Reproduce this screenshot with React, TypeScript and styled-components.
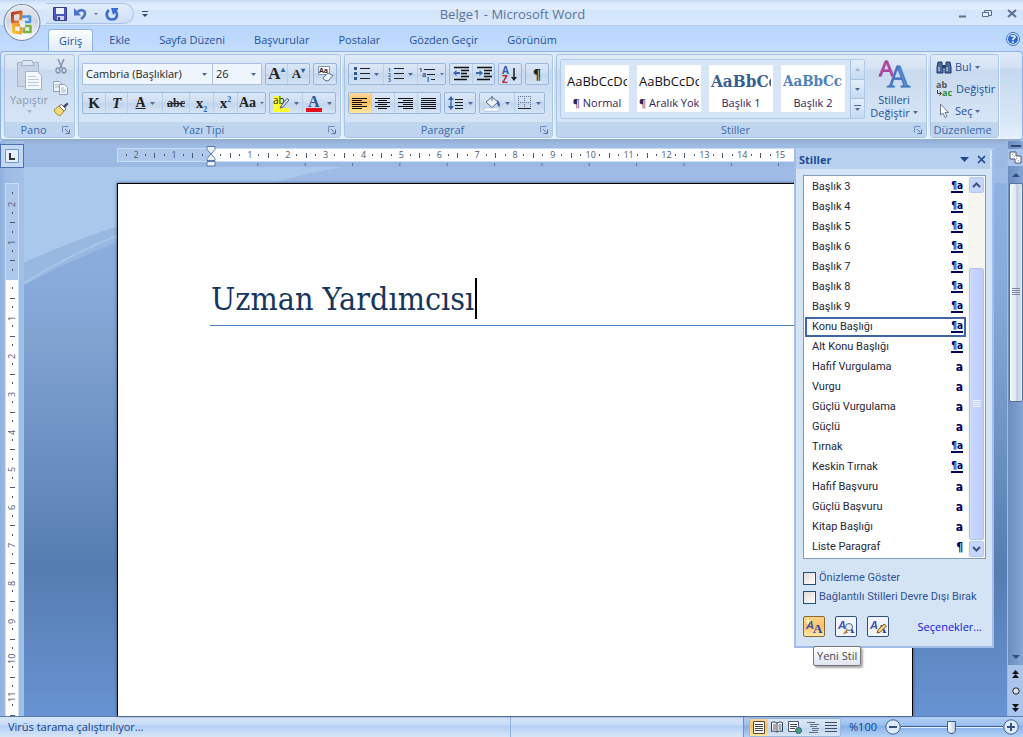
import React from 'react';
import styled, { createGlobalStyle, css } from 'styled-components';

const ui = `"Open Sans", "Noto Sans", sans-serif`;
const paneFont = `Roboto, "Noto Sans", sans-serif`;
const serif = `"DejaVu Serif Condensed", "DejaVu Serif", serif`;

const GlobalStyle = createGlobalStyle`
  *, *::before, *::after { box-sizing: border-box; }
  body { margin: 0; font-family: ${ui}; font-size: 11px; line-height: 14px; color: #15428b; }
  button, select, input { font: inherit; color: inherit; margin: 0; padding: 0; }
  button { background: none; border: 0; }
  svg { display: block; flex: none; overflow: visible; }
  h1, h2, ul { margin: 0; padding: 0; font-weight: normal; }
`;

/* ---------- window frame ---------- */
const Window = styled.div`
  display: flex;
  flex-direction: column;
  height: 100vh;
  overflow: hidden;
  position: relative;
  background: #bfdbff;
`;
const TitleBar = styled.header`
  display: grid;
  grid-template-columns: 1fr auto 1fr;
  align-items: center;
  height: 26px;
  padding: 2px 6px 0 8px;
  background: linear-gradient(#c3d8f4 0, #dbe9fb 3px, #e3effd 9px, #d3e5fb 10px, #d9e9fd 100%);
  border-bottom: 1px solid #b0cdf3;
`;
const QuickAccess = styled.div`
  display: flex;
  align-items: center;
  gap: 8px;
  padding-left: 38px;
`;
const QuickPill = styled.div`
  display: flex;
  align-items: center;
  gap: 7px;
  height: 21px;
  width: 88px;
  padding-left: 7px;
  border: 1px solid #a9c3e8;
  border-left: 0;
  border-radius: 0 11px 11px 0;
  background: linear-gradient(#e2edfb, #cfe0f6);
`;
const Caption = styled.h1`
  font-size: 13px;
  line-height: 18px;
  color: #5d7299;
`;
const WindowButtons = styled.div`
  display: flex;
  justify-content: flex-end;
  align-items: center;
  gap: 15px;
`;
const OfficeButton = styled.button`
  position: absolute;
  left: 3px;
  top: 3px;
  z-index: 2;
`;
const TabRow = styled.nav`
  display: flex;
  align-items: flex-end;
  height: 25px;
  padding: 0 3px 0 48px;
  background: linear-gradient(#bad6fd, #c3dcff);
`;
const Tab = styled.button<{ $active?: boolean }>`
  height: 22px;
  padding: 0 11px;
  margin-right: 7px;
  font-size: 11px;
  line-height: 22px;
  color: #25509b;
  border-radius: 3px 3px 0 0;
  ${(p) => p.$active && css`
    margin-right: 5px;
    padding: 0 10px;
    background: linear-gradient(#fbfdff, #e1ecfa);
    border: 1px solid #8db2e3;
    border-bottom: 0;
    line-height: 21px;
  `}
`;
const HelpButton = styled.button`
  margin-left: auto;
  align-self: center;
`;

/* ---------- ribbon ---------- */
const Ribbon = styled.section`
  display: flex;
  gap: 3px;
  height: 90px;
  padding: 2px 3px 1px 3px;
  border: 1px solid #8db2e3;
  border-bottom: 2px solid #93afcf;
  border-radius: 4px;
  background: linear-gradient(#dfeaf8 0, #d2e0f2 16px, #c6d8ee 17px, #d8e7f7 80%, #e6f2fd 100%);
`;
const GroupBox = styled.section`
  display: flex;
  flex-direction: column;
  border: 1px solid #a9c5e6;
  border-radius: 3px;
  overflow: hidden;
  box-shadow: 1px 1px 0 #eef6ff;
  background: linear-gradient(#e0eaf7 0, #d5e2f3 14px, #c9daef 15px, #dae8f8 100%);
`;
const GroupBody = styled.div`
  flex: 1;
  display: flex;
  padding: 4px 3px 0 3px;
`;
const GroupFooter = styled.footer`
  display: flex;
  align-items: center;
  height: 15px;
  padding-right: 4px;
  background: linear-gradient(#c1d6ee, #bdd4f0);
  color: #3e6aaa;
  line-height: 15px;
`;
const GroupTitle = styled.h2`
  flex: 1;
  font-size: 11px;
  text-align: center;
`;
const Rows = styled.div`
  display: flex;
  flex-direction: column;
  gap: 7px;
  padding-top: 4px;
`;
const ControlRow = styled.div`
  display: flex;
  gap: 3px;
`;
const Strip = styled.div`
  display: flex;
  height: 22px;
  border: 1px solid #9ab7dc;
  border-radius: 2px;
  background: linear-gradient(#dce8f7 0, #ccdcf1 50%, #c2d5ed 51%, #d5e4f6 100%);
`;
const Tool = styled.button<{ $w?: number; $on?: boolean }>`
  display: flex;
  align-items: center;
  justify-content: center;
  gap: 4px;
  width: ${(p) => p.$w ?? 22}px;
  color: #222;
  & + & { border-left: 1px solid #b9cfea; }
  ${(p) => p.$on && css`background: linear-gradient(#fcd9a0, #fdbb62 45%, #fcc873 60%, #fee7a0);`}
`;
const Letter = styled.span<{ $size?: number; $color?: string }>`
  font-family: "Liberation Serif", serif;
  font-weight: bold;
  font-size: ${(p) => p.$size ?? 15}px;
  line-height: 18px;
  color: ${(p) => p.$color ?? '#222'};
  sub, sup { font-size: 8px; line-height: 0; color: #2b5fb5; }
  em { font-style: italic; }
`;
const Combo = styled.label<{ $w: number }>`
  display: grid;
  align-items: center;
  width: ${(p) => p.$w}px;
  height: 22px;
  border: 1px solid #abc1de;
  background: #eef5fd;
  & + & { margin-left: -4px; }
  > * { grid-area: 1 / 1; }
  > svg { justify-self: end; margin-right: 5px; pointer-events: none; }
`;
const Select = styled.select`
  appearance: none;
  height: 20px;
  width: 100%;
  padding-left: 3px;
  border: 0;
  background: transparent;
  color: #1e1e1e;
`;
const PasteButton = styled.button`
  display: flex;
  flex-direction: column;
  align-items: center;
  width: 42px;
  color: #8c9bb0;
  gap: 3px;
`;
const IconColumn = styled.div`
  display: flex;
  flex-direction: column;
  align-items: center;
  gap: 7px;
  width: 21px;
`;
const Gallery = styled.div`
  display: flex;
  height: 60px;
  border: 1px solid #b0cbea;
  border-radius: 2px;
  background: #d7e6f7;
`;
const Cards = styled.div`
  display: flex;
  gap: 8px;
  padding: 5px 5px 6px 4px;
`;
const Card = styled.button`
  display: flex;
  flex-direction: column;
  width: 64px;
  padding: 0 2px;
  overflow: hidden;
  background: #fff;
  color: #33235c;
`;
const Sample = styled.span<{ $heading?: number }>`
  width: 100%;
  height: 31px;
  line-height: 33px;
  overflow: hidden;
  white-space: nowrap;
  text-align: left;
  font-size: 13px;
  color: #111;
  ${(p) => p.$heading && css`
    font-family: ${serif};
    font-weight: bold;
    color: ${p.$heading === 1 ? '#365f91' : '#4f81bd'};
    font-size: ${p.$heading === 1 ? 17 : 15}px;
  `}
`;
const CardName = styled.span`
  width: 100%;
  text-align: center;
  white-space: nowrap;
`;
const GallerySide = styled.div`
  display: flex;
  flex-direction: column;
  width: 14px;
`;
const GalleryArrow = styled.button`
  flex: 1;
  display: flex;
  align-items: center;
  justify-content: center;
  border-left: 1px solid #a6c3e6;
  background: linear-gradient(#e3eefa, #c6daf1);
  & + & { border-top: 1px solid #a6c3e6; }
`;
const BigButton = styled.button`
  display: flex;
  flex-direction: column;
  align-items: center;
  width: 58px;
  line-height: 13px;
  white-space: nowrap;
  > svg { margin-bottom: 5px; }
  color: #25509b;
`;
const Inline = styled.span`
  display: flex;
  align-items: center;
  gap: 3px;
`;
const EditList = styled.div`
  display: flex;
  flex-direction: column;
  gap: 6px;
`;
const EditButton = styled.button`
  display: flex;
  align-items: center;
  gap: 3px;
  height: 16px;
  padding-left: 2px;
  color: #25509b;
`;

/* ---------- document area ---------- */
const Workspace = styled.main`
  flex: 1;
  min-height: 0;
  display: flex;
  position: relative;
  background: #9ebbe4;
`;
const RulerColumn = styled.div`
  display: flex;
  flex-direction: column;
  align-items: center;
  width: 24px;
  background: linear-gradient(90deg, #8fb1dd, #9dbbe3 6px, #a3c0e8);
`;
const TabStop = styled.button`
  display: flex;
  align-items: center;
  justify-content: center;
  width: 24px;
  height: 24px;
  margin-top: 3px;
  border: 1px solid #4970b8;
  background: #c4d8f3;
`;
const VerticalRuler = styled.div`
  flex: 1;
  display: flex;
  flex-direction: column;
  width: 14px;
  margin-top: 15px;
  min-height: 0;
  overflow: hidden;
  border: 1px solid #c9defa;
  border-bottom: 0;
`;
const Center = styled.div`
  flex: 1;
  min-width: 0;
  display: flex;
  flex-direction: column;
`;
const HorizontalBand = styled.div`
  height: 26px;
  padding: 7px 0 0 93px;
  background: linear-gradient(#94b0d8 0, #9ebbe4 4px, #9ab9e2);
`;
const HorizontalRuler = styled.div`
  display: grid;
  grid-template-columns: 94px 606px 94px;
  width: fit-content;
  height: 14px;
  border: 1px solid #c9defa;
  border-right: 0;
`;
const Span = styled.div<{ $white?: boolean; $vertical?: boolean }>`
  display: grid;
  flex: none;
  ${(p) => (p.$vertical ? css`grid-template-rows: repeat(16, 1fr); height: 606px;` : css`grid-template-columns: repeat(16, 1fr);`)}
  background: ${(p) => (p.$white ? '#fff' : '#adc8ea')};
  color: #4c5a70;
  font-size: 9px;
  line-height: 12px;
`;
const LeftMargin = styled(Span)`
  grid-template-columns: 18px 38px 38px;
`;
const TopMargin = styled(Span)`
  height: 96px;
  grid-template-rows: 20px 38px 38px;
`;
/* One centimetre: marks at each quarter, the number centred on its far edge. */
const Centimetre = styled.span<{ $vertical?: boolean; $parts?: number }>`
  display: grid;
  ${(p) => (p.$vertical
    ? css`grid-template-rows: repeat(${p.$parts ?? 4}, 1fr); align-items: end; justify-items: center;`
    : css`grid-template-columns: repeat(${p.$parts ?? 4}, 1fr); justify-items: end; align-items: center;`)}
`;
const Dot = styled.i`
  width: 1px;
  height: 2px;
  background: #4c5a70;
`;
const Dash = styled.i<{ $vertical?: boolean }>`
  width: ${(p) => (p.$vertical ? 5 : 1)}px;
  height: ${(p) => (p.$vertical ? 1 : 5)}px;
  background: #4c5a70;
`;
const Digit = styled.span<{ $vertical?: boolean }>`
  display: flex;
  justify-content: center;
  width: 12px;
  height: 12px;
  ${(p) => (p.$vertical ? css`margin-bottom: -6px; writing-mode: vertical-rl; rotate: 180deg;` : css`margin-right: -6px;`)}
`;
const TabTicks = styled.div`
  width: 606px;
  height: 3px;
  margin: 1px 0 0 94px;
  background: linear-gradient(to left, #56759f 1px, transparent 1px) 0 0 / 7.8125% 100%;
`;
const IndentMarker = styled.div`
  position: absolute;
  left: 206px;
  top: 4px;
`;
const Canvas = styled.div`
  flex: 1;
  min-height: 0;
  position: relative;
  background: linear-gradient(#8fb2e4 0, #88aada 22%, #7fa2d1 32%, #567db1 73%, #6893d2 100%);
`;
const Swoosh = styled.svg`
  position: absolute;
  inset: 0;
`;
const Sheet = styled.article`
  position: relative;
  width: 796px;
  height: 100%;
  margin: 0 0 0 93px;
  padding: 92px 95px 0 92px;
  background: #fff;
  border: 1px solid #000;
  border-bottom: 0;
  box-shadow: 0 0 3px #35507c;
`;
const SheetFrame = styled.div`
  height: 100%;
  padding-top: 16px;
`;
const Heading = styled.p`
  display: flex;
  align-items: center;
  margin: 0;
  height: 50px;
  padding: 0 0 4px 1px;
  border-bottom: 1px solid #4f81bd;
  font-family: ${serif};
  font-size: 32px;
  line-height: 40px;
  color: #17365d;
  white-space: nowrap;
`;
const Caret = styled.i`
  width: 2px;
  height: 41px;
  margin-left: 1px;
  background: #000;
`;
const ScrollColumn = styled.div`
  display: flex;
  flex-direction: column;
  align-items: center;
  width: 16px;
  border-left: 1px solid #9fbce6;
  background: linear-gradient(90deg, #6b8dbf, #84a5d5);
`;
const SplitBar = styled.i`
  width: 10px;
  height: 2px;
  margin: 4px 0 2px;
  background: #32456b;
`;
const ScrollButton = styled.button<{ $light?: boolean }>`
  display: flex;
  align-items: center;
  justify-content: center;
  width: 15px;
  height: 17px;
  background: ${(p) => (p.$light ? '#a9c5ec' : 'transparent')};
`;
const Thumb = styled.div`
  display: flex;
  align-items: center;
  justify-content: center;
  width: 14px;
  flex: 0 0 38%;
  border: 1px solid #5b7398;
  border-radius: 2px;
  background: linear-gradient(90deg, #f4f8fd, #dde6f1 50%, #c0cddd 55%, #dfe9f5);
`;
const Spacer = styled.div`
  flex: 1;
`;

/* ---------- styles pane ---------- */
const Pane = styled.aside`
  position: absolute;
  right: 29px;
  top: 7px;
  width: 200px;
  border: 2px solid #a3bce9;
  border-top-color: #b7cdee;
  background: #d5e4f4;
`;
const PaneHeader = styled.header`
  display: flex;
  align-items: center;
  height: 19px;
  margin-right: 2px;
  padding: 0 4px 0 3px;
  gap: 8px;
  background: #b7d0f0;
`;
const PaneTitle = styled.h2`
  flex: 1;
  font-size: 11px;
  font-weight: bold;
  color: #1c4a95;
`;
const ListBox = styled.div`
  display: flex;
  margin: 6px 6px 0 7px;
  height: 384px;
  border: 1px solid #7f9db9;
  background: #fff;
`;
const StyleList = styled.ul`
  flex: 1;
  list-style: none;
  padding-top: 1px;
  font-family: ${paneFont};
`;
const StyleItem = styled.button<{ $on?: boolean }>`
  display: flex;
  align-items: center;
  justify-content: space-between;
  width: 161px;
  height: 20px;
  margin-left: 1px;
  padding: 0 1px 0 5px;
  border: 2px solid ${(p) => (p.$on ? '#3f65a3' : 'transparent')};
  color: #262636;
`;
const Mark = styled.b<{ $linked?: boolean }>`
  font-family: "DejaVu Sans Condensed", "DejaVu Sans", sans-serif;
  font-size: ${(p) => (p.$linked ? 10 : 12)}px;
  line-height: 10px;
  color: #000064;
  ${(p) => p.$linked && css`border-bottom: 2px solid #000064;`}
`;
const ListScroll = styled.div`
  display: flex;
  flex-direction: column;
  width: 17px;
  padding: 1px;
  background: #f6f5f0;
`;
const ListArrow = styled.button`
  display: flex;
  align-items: center;
  justify-content: center;
  height: 16px;
  border: 1px solid #b4c8f6;
  border-radius: 2px;
  background: #c5d5fc;
`;
const ListThumb = styled.div`
  display: flex;
  align-items: center;
  justify-content: center;
  flex: 0 0 272px;
  margin: 0 0 1px;
  border: 1px solid #b0c4f4;
  border-radius: 2px;
  background: linear-gradient(90deg, #cbd8fe, #bccdfa);
`;
const Checks = styled.div`
  display: flex;
  flex-direction: column;
  gap: 5px;
  padding: 12px 0 0 7px;
  font-family: ${paneFont};
`;
const CheckLabel = styled.label`
  display: flex;
  align-items: center;
  gap: 3px;
  height: 14px;
  white-space: nowrap;
  color: #2f5197;
`;
const Check = styled.input`
  appearance: none;
  flex: none;
  width: 13px;
  height: 13px;
  border: 1px solid #1d5180;
  background: linear-gradient(135deg, #dddcd5, #fff);
`;
const PaneFooter = styled.footer`
  display: flex;
  align-items: center;
  gap: 10px;
  padding: 12px 10px 9px 7px;
`;
const PaneButton = styled.button<{ $on?: boolean }>`
  display: flex;
  align-items: center;
  justify-content: center;
  width: 22px;
  height: 21px;
  border: 1px solid ${(p) => (p.$on ? '#8a6a34' : '#33517f')};
  border-radius: 2px;
  background: ${(p) => (p.$on ? 'linear-gradient(#fcd38a, #fdc164 50%, #fde9ae)' : '#f1f4f8')};
`;
const OptionsLink = styled.a`
  margin-left: auto;
  color: #1414dc;
  text-decoration: none;
`;
const Tooltip = styled.div`
  position: absolute;
  left: 17px;
  top: 496px;
  height: 20px;
  padding: 0 3px;
  line-height: 18px;
  white-space: nowrap;
  border: 1px solid #767676;
  border-radius: 2px;
  background: linear-gradient(#fff, #dfe5f2);
  color: #4c4c4c;
  box-shadow: 2px 2px 2px #0005;
`;

/* ---------- status bar ---------- */
const StatusBar = styled.footer`
  display: flex;
  height: 21px;
  border-top: 1px solid #567db0;
  color: #15428b;
  background: linear-gradient(#d7e6f9 0, #c7dcf8 8px, #b3d0f5 9px, #d7e5f7 100%);
`;
const StatusText = styled.span`
  width: 511px;
  padding-left: 8px;
  line-height: 20px;
  border-right: 1px solid #8fb1dd;
`;
const StatusTools = styled.div`
  display: flex;
  align-items: center;
  gap: 8px;
  margin-left: auto;
  width: 280px;
  padding: 0 4px 0 5px;
  border-left: 1px solid #6f94c8;
  background: linear-gradient(#b4d0f5 0, #9dc1ef 8px, #84b0e7 9px, #b5d2f5 100%);
`;
const ViewStrip = styled(Strip)`
  flex: none;
  height: 19px;
`;
const ViewButton = styled(Tool)`
  width: 18px;
  & + & { border-left: 0; }
`;
const ZoomRow = styled.div`
  flex: 1;
  min-width: 0;
  display: flex;
  align-items: center;
`;
const Slider = styled.input`
  appearance: none;
  flex: 1;
  min-width: 0;
  height: 16px;
  background: linear-gradient(transparent 7px, #3f639b 7px 8px, #e4effd 8px 9px, transparent 9px);
  &::-webkit-slider-thumb {
    appearance: none;
    width: 9px;
    height: 13px;
    border: 1px solid #3f5f8f;
    border-radius: 1px 1px 5px 5px;
    background: linear-gradient(90deg, #fff, #b9cde8);
  }
`;

/* ---------- icons ---------- */
type IconProps = { w?: number; h?: number; crisp?: boolean; children: React.ReactNode };
const Icon = ({ w = 16, h = 16, crisp, children }: IconProps) => (
  <svg width={w} height={h} viewBox={`0 0 ${w} ${h}`} fill="none" aria-hidden="true" shapeRendering={crisp ? 'crispEdges' : undefined}>
    {children}
  </svg>
);
const Arrow = ({ color = '#4d6a96', w = 5, up }: { color?: string; w?: number; up?: boolean }) => (
  <Icon w={w} h={Math.ceil(w / 2)}>
    <path d={up ? `M0 ${Math.ceil(w / 2)}H${w}L${w / 2} 0z` : `M0 0H${w}L${w / 2} ${Math.ceil(w / 2)}z`} fill={color} />
  </Icon>
);
const Lines = ({ rows, color = '#111', w = 16, h = 14 }: { rows: number[][]; color?: string; w?: number; h?: number }) => (
  <Icon w={w} h={h} crisp>
    {rows.map(([x, y, len], i) => <path key={i} d={`M${x} ${y + 0.5}h${len}`} stroke={color} />)}
  </Icon>
);
const Launcher = () => (
  <Icon w={8} h={8}>
    <path d="M.5 6.500V.5H6.500" stroke="#6e8fc0" />
    <path d="M3 3l3.500 3.500M7.500 3.500v4h-4" stroke="#55769f" />
  </Icon>
);
const Chevron = ({ up }: { up?: boolean }) => (
  <Icon w={9} h={6}><path d={up ? 'M1 5l3.500-3.500L8 5' : 'M1 1l3.500 3.500L8 1'} stroke="#3f5380" strokeWidth="2" /></Icon>
);
const Grip = ({ color }: { color: string }) => <Lines w={8} h={8} color={color} rows={[[0, 0, 8], [0, 2, 8], [0, 4, 8], [0, 6, 8]]} />;

const OfficeLogo = () => (
  <Icon w={38} h={38}>
    <defs>
      <radialGradient id="orb" cx="50%" cy="85%" r="80%">
        <stop offset="0" stopColor="#ffffff" /><stop offset=".5" stopColor="#dfe3ec" /><stop offset="1" stopColor="#a9b4c8" />
      </radialGradient>
      <linearGradient id="gloss" x1="0" y1="0" x2="0" y2="1">
        <stop offset="0" stopColor="#fff" /><stop offset="1" stopColor="#d5dbe7" />
      </linearGradient>
      <linearGradient id="red" x1="0" y1="0" x2="1" y2="1"><stop offset="0" stopColor="#b8321a" /><stop offset="1" stopColor="#f08a2c" /></linearGradient>
      <linearGradient id="gold" x1="0" y1="1" x2="1" y2="0"><stop offset="0" stopColor="#f9c22e" /><stop offset="1" stopColor="#ef8f1f" /></linearGradient>
    </defs>
    <circle cx="19" cy="19.500" r="18" fill="url(#orb)" stroke="#76869f" />
    <circle cx="19" cy="19" r="16.500" stroke="#fff" strokeOpacity=".8" />
    <path d="M3 18a16 16 0 0 1 32 0q-16-6-32 0z" fill="url(#gloss)" opacity=".7" />
    <path d="M16 19H9.500V10.500l8.500-1.500v6l-1 2" stroke="url(#red)" strokeWidth="3" strokeLinejoin="round" />
    <path d="M20.500 15v-1.500h6.500V19h-5" stroke="#4a93dc" strokeWidth="2.600" strokeLinejoin="round" />
    <path d="M17 22h-6.500v7l7.500 1v-6" stroke="url(#gold)" strokeWidth="2.800" strokeLinejoin="round" />
    <path d="M21 24.500V29h6.500v-6H22" stroke="#7db343" strokeWidth="2.600" strokeLinejoin="round" />
  </Icon>
);
const Save = () => (
  <Icon w={14} h={14}>
    <path d="M.5.5h13v13H1.500l-1-1z" fill="#4b58b5" stroke="#343f8d" />
    <path d="M3 1h8v6H3z" fill="#eef2ff" /><path d="M4 9h7v4H4z" fill="#ccd4f3" /><path d="M5 10h2v3H5z" fill="#343f8d" />
  </Icon>
);
const Undo = () => (
  <Icon w={13} h={13}>
    <path d="M3 5.500C6 2 11 2.500 11 6.500c0 2.500-2 4-4 5.500" stroke="#4a72c4" strokeWidth="2.600" /><path d="M0 1V8.500h7z" fill="#4a72c4" />
  </Icon>
);
const Redo = () => (
  <Icon w={14} h={14}>
    <path d="M4 3C0 6 1.500 12.500 7 12.500S13 7 10.500 4" stroke="#3d6ecf" strokeWidth="2.600" /><path d="M6 1H13v1.500L8 8z" fill="#3d6ecf" />
  </Icon>
);
const Help = () => (
  <Icon w={14} h={14}>
    <circle cx="7" cy="7" r="6.500" fill="#dcecff" stroke="#3b6fc4" /><circle cx="7" cy="7" r="5" fill="#2a66d0" />
    <text x="7" y="11" textAnchor="middle" fontSize="11" fontWeight="bold" fill="#fff">?</text>
  </Icon>
);
const Paste = () => (
  <Icon w={28} h={31}>
    <path d="M2.500 3.500h21v24h-21z" fill="#c7d4e6" stroke="#a5b5cb" />
    <path d="M8 1.500h9l2 5H6z" fill="#dde6f2" stroke="#9dafc7" />
    <path d="M10.500 12.500h12l4 4v14h-16z" fill="#f4f8fd" stroke="#a5b5cb" />
    <path d="M13 17.500h8M13 20.500h11M13 23.500h11M13 26.500h11" stroke="#bccadd" />
  </Icon>
);
const Cut = () => (
  <Icon w={12} h={15}>
    <path d="M3 0l4 9M9 0L5 9" stroke="#8494ad" strokeWidth="1.600" />
    <ellipse cx="3" cy="11.500" rx="2" ry="2.500" stroke="#8494ad" strokeWidth="1.400" /><ellipse cx="9" cy="11.500" rx="2" ry="2.500" stroke="#8494ad" strokeWidth="1.400" />
  </Icon>
);
const Copy = () => (
  <Icon w={16} h={14}>
    <path d="M.5.5h6l3 3v7h-9z" fill="#eef3fa" stroke="#8e9fb9" /><path d="M6.500 3.500h5l3 3v7h-8z" fill="#f6f9fd" stroke="#8e9fb9" />
    <path d="M2 4h4M2 6h4M8 7h3M8 9h5M8 11h5" stroke="#a9b8ce" />
  </Icon>
);
const Brush = () => (
  <Icon w={16} h={15}>
    <path d="M1 8l5-4 5 5-4 5q-4-1-6-6z" fill="#f6d873" stroke="#b08a2c" /><path d="M6 4l5 5 2-2-4.500-4.500z" fill="#fff" stroke="#6b6b6b" />
    <path d="M10 4l4-3.500 1.500 1.500L12 6z" fill="#3d4a6b" />
  </Icon>
);
const Eraser = () => (
  <Icon w={17} h={16}>
    <path d="M1.500.5h11v8h-11z" fill="#fff" stroke="#8295b5" /><text x="2" y="7" fontSize="7" fontWeight="bold" fill="#222">Aa</text>
    <path d="M6 12l5-5 5 2.500-5 5.500q-4 0-5-3z" fill="#eef3fb" stroke="#5c6f8f" />
  </Icon>
);
const Highlight = () => (
  <Icon w={17} h={17}>
    <path d="M0 1h9v12h8v4H0z" fill="#ffff2e" /><text x="0" y="9" fontSize="10" fill="#222">ab</text>
    <path d="M8 11l6-7.500 2 1.500-6 7-3 1z" fill="#dfe7f2" stroke="#4a5a78" />
  </Icon>
);
const bullets = [[6, 1, 10], [6, 6, 10], [6, 11, 10]];
const Bullets = () => (
  <Icon w={16} h={14} crisp>
    {bullets.map(([x, y, l]) => <path key={y} d={`M${x} ${y + 0.5}h${l}`} stroke="#222" />)}
    {[0, 5, 10].map((y) => <path key={y} d={`M0 ${y}h3v3h-3z`} fill="#35598f" />)}
  </Icon>
);
const Numbers = () => (
  <Icon w={16} h={14}>
    {bullets.map(([x, y, l]) => <path key={y} d={`M${x} ${y + 0.5}h${l}`} stroke="#222" />)}
    {[1, 2, 3].map((n) => <text key={n} x="0" y={n * 5 - 0.5} fontSize="5" fontWeight="bold" fill="#35598f">{n}</text>)}
  </Icon>
);
const Multilevel = () => (
  <Icon w={17} h={15}>
    <path d="M5 2.500h11M8 7.500h8M12 12.500h4" stroke="#222" />
    <text x="0" y="5" fontSize="6" fontWeight="bold" fill="#35598f">1</text><text x="3" y="10" fontSize="7" fontWeight="bold" fill="#35598f">a</text><text x="8" y="15" fontSize="7" fontWeight="bold" fill="#35598f">i</text>
  </Icon>
);
const Indent = ({ out }: { out?: boolean }) => (
  <Icon w={16} h={14}>
    <path d="M1 .5h15M8 3.500h8M8 6.500h6M8 9.500h8M1 12.500h13" stroke="#111" strokeWidth="1.600" />
    <path d={out ? 'M0 6l3.500-3v2H7v2H3.500v2z' : 'M7 6L3.500 3v2H0v2h3.500v2z'} fill="#3766b3" />
  </Icon>
);
const Sort = () => (
  <Icon w={16} h={17}>
    <text x="0" y="8" fontSize="10" fontWeight="bold" fill="#2e5dae">A</text><text x="0" y="17" fontSize="10" fontWeight="bold" fill="#b3262e">Z</text>
    <path d="M12 2v12" stroke="#222" strokeWidth="1.500" /><path d="M9 11h6l-3 4z" fill="#222" />
  </Icon>
);
const Spacing = () => (
  <Icon w={16} h={16}>
    <path d="M3 3v10" stroke="#3766b3" strokeWidth="1.400" /><path d="M0 5l3-4 3 4zM0 11l3 4 3-4z" fill="#3766b3" />
    <path d="M7 4.500h8M7 7.500h8M7 10.500h8M7 13.500h8" stroke="#222" />
  </Icon>
);
const Bucket = () => (
  <Icon w={17} h={16}>
    <path d="M2 7l6-5 6 5-6 5.500z" fill="#eef3fa" stroke="#556a8e" /><path d="M8 1v5" stroke="#556a8e" /><path d="M13 5q4 3 2.500 7Q13 11 13 7z" fill="#3766b3" />
    <path d="M0 13h15v3H0z" fill="#fff" stroke="#9aa9c0" strokeWidth=".5" />
  </Icon>
);
const Borders = () => (
  <Icon w={14} h={14} crisp>
    <path d="M.5 0v13M6.500 0v13M12.500 0v13M0 .5h13M0 6.500h13" stroke="#5f7192" strokeDasharray="1 1" /><path d="M0 12.500h13" stroke="#222" />
  </Icon>
);
const ChangeStyles = () => (
  <Icon w={32} h={29}>
    <text x="1" y="17" fontFamily="Liberation Sans" fontSize="22" fill="#c04fb2" stroke="#9c3a92" strokeWidth=".8">A</text>
    <text x="9" y="28" fontFamily="Liberation Serif" fontSize="32" fill="#5b8ed6" stroke="#3a6fbd" strokeWidth="1">A</text>
  </Icon>
);
const Binoculars = () => (
  <Icon w={16} h={13}>
    <path d="M2 1h4v3l1 1v7H1V6zM10 1h4l1 5v6H9V5l1-1z" fill="#4a6aa0" stroke="#1f3a6b" /><path d="M6 4h4v3H6z" fill="#1f3a6b" /><path d="M3 6v4M11 6v4" stroke="#dbe7f8" />
  </Icon>
);
const Replace = () => (
  <Icon w={17} h={16}>
    <text x="0" y="7" fontSize="9" fontWeight="bold" fill="#555">ab</text><text x="6" y="15" fontSize="9" fontWeight="bold" fill="#2f8f2f">ac</text>
    <path d="M1.500 9v3.500H5M3.500 10.500l2 2-2 2" stroke="#444" />
  </Icon>
);
const Pointer = () => (
  <Icon w={16} h={16}><path d="M4.500 1v11l2.500-2 2 4.500 2-1L9 9.500h3.500z" fill="#fff" stroke="#6a7a96" /></Icon>
);
const StylesIcon = ({ kind }: { kind: 'new' | 'inspect' | 'manage' }) => (
  <Icon w={18} h={17}>
    <text x="1" y="11" fontFamily="Liberation Sans" fontSize="11" fontStyle="italic" fontWeight="bold" fill="#3c4fb0">A</text>
    <text x="8" y="15" fontFamily="Liberation Serif" fontSize="13" fontWeight="bold" fill="#2e3fa8">A</text>
    {kind === 'new' && <path d="M3 1v5M.5 3.500h5" stroke="#fff7b0" strokeWidth="1.500" />}
    {kind === 'inspect' && <><circle cx="12" cy="9" r="3.500" fill="#e3ecf8" stroke="#5b6b86" /><path d="M10 12l-3 4" stroke="#c98b2c" strokeWidth="2" /></>}
    {kind === 'manage' && <path d="M8 15l1-3 6-6 2.500 2-6 6z" fill="#f4cf83" stroke="#7b5c28" />}
  </Icon>
);
const PageView = ({ kind }: { kind: number }) => (
  <Icon w={14} h={13}>
    {kind === 0 && <><path d="M1.500.5h11v12h-11z" fill="#fff" stroke="#5d4b2e" /><path d="M3 3.500h8M3 5.500h8M3 7.500h8M3 9.500h8" stroke="#444" /></>}
    {kind === 1 && <><path d="M7 2Q4 0 1.500 1.500v9Q4 9 7 11q3-2 5.500-.5v-9Q10 0 7 2zv9" fill="#fff" stroke="#33435e" /><path d="M3 4h3M3 6h3M3 8h3M8.500 4h3M8.500 6h3M8.500 8h3" stroke="#556" /></>}
    {kind === 2 && <><path d="M.5.5h10v10H.5z" fill="#fff" stroke="#4a5a78" /><path d="M2 3.500h7M2 5.500h7M2 7.500h5" stroke="#445" /><circle cx="10.500" cy="9.500" r="3" fill="#4aa06a" stroke="#2c5da8" /></>}
    {kind === 3 && <path d="M1 1.500h8M4 3.500h9M4 5.500h7M6 7.500h7M6 9.500h6M3 11.500h9" stroke="#5f6f8c" />}
    {kind === 4 && <path d="M1 1.500h12M1 4.500h12M1 7.500h12M1 10.500h12" stroke="#3c4c68" />}
  </Icon>
);
const ZoomIcon = ({ plus }: { plus?: boolean }) => (
  <Icon w={16} h={16}>
    <circle cx="8" cy="8" r="7.200" fill="#dcebfb" stroke="#3f5f8f" /><path d={plus ? 'M4 8h8M8 4v8' : 'M4 8h8'} stroke="#35507c" strokeWidth="2" />
  </Icon>
);

/* ---------- composition ---------- */
const Group = ({ title, launcher = true, children }: { title: string; launcher?: boolean; children: React.ReactNode }) => (
  <GroupBox>
    <GroupBody>{children}</GroupBody>
    <GroupFooter>
      <GroupTitle>{title}</GroupTitle>
      {launcher && <button aria-label={`${title} ayarları`}><Launcher /></button>}
    </GroupFooter>
  </GroupBox>
);
const Cm = ({ n, vertical }: { n?: number; vertical?: boolean }) => (
  <Centimetre $vertical={vertical}>
    <Dot /><Dash $vertical={vertical} /><Dot />{n !== undefined && <Digit $vertical={vertical}>{n}</Digit>}
  </Centimetre>
);
const HalfCm = ({ n, vertical }: { n: number; vertical?: boolean }) => (
  <Centimetre $vertical={vertical} $parts={2}><Dot /><Digit $vertical={vertical}>{n}</Digit></Centimetre>
);
const centimetres = Array.from({ length: 15 }, (_, i) => i + 1);
const tabs = ['Giriş', 'Ekle', 'Sayfa Düzeni', 'Başvurular', 'Postalar', 'Gözden Geçir', 'Görünüm'];
const styleItems: [string, string][] = [
  ['Başlık 3', '¶a'], ['Başlık 4', '¶a'], ['Başlık 5', '¶a'], ['Başlık 6', '¶a'], ['Başlık 7', '¶a'], ['Başlık 8', '¶a'], ['Başlık 9', '¶a'],
  ['Konu Başlığı', '¶a'], ['Alt Konu Başlığı', '¶a'], ['Hafif Vurgulama', 'a'], ['Vurgu', 'a'], ['Güçlü Vurgulama', 'a'], ['Güçlü', 'a'],
  ['Tırnak', '¶a'], ['Keskin Tırnak', '¶a'], ['Hafif Başvuru', 'a'], ['Güçlü Başvuru', 'a'], ['Kitap Başlığı', 'a'], ['Liste Paragraf', '¶'],
];
const alignRows = {
  left: [[0, 0, 15], [0, 2, 10], [0, 4, 15], [0, 6, 10], [0, 8, 15], [0, 10, 10]],
  center: [[0, 0, 15], [3, 2, 9], [0, 4, 15], [3, 6, 9], [0, 8, 15], [3, 10, 9]],
  right: [[0, 0, 15], [5, 2, 10], [0, 4, 15], [5, 6, 10], [0, 8, 15], [5, 10, 10]],
  full: [[0, 0, 15], [0, 2, 15], [0, 4, 15], [0, 6, 15], [0, 8, 15], [0, 10, 15]],
};

export default function App() {
  return (
    <Window>
      <GlobalStyle />
      <OfficeButton aria-label="Office Düğmesi"><OfficeLogo /></OfficeButton>
      <TitleBar>
        <QuickAccess>
          <QuickPill>
            <button aria-label="Kaydet"><Save /></button>
            <button aria-label="Geri Al"><Undo /></button>
            <Arrow w={4} />
            <button aria-label="Yinele"><Redo /></button>
          </QuickPill>
          <button aria-label="Özelleştir">
            <Icon w={6} h={6}><path d="M0 .5h6" stroke="#344a73" /><path d="M0 3h6L3 6z" fill="#344a73" /></Icon>
          </button>
        </QuickAccess>
        <Caption>Belge1 - Microsoft Word</Caption>
        <WindowButtons>
          <button aria-label="Simge durumuna küçült"><Icon w={9} h={9}><path d="M1 7.500h7" stroke="#5c6f8e" strokeWidth="2" /></Icon></button>
          <button aria-label="Önceki boyut"><Icon w={10} h={9}><path d="M2.500 1.500h7v5h-7z" stroke="#5c6f8e" /><path d="M.5 3.500h6v4h-6z" fill="#e3effd" stroke="#5c6f8e" /></Icon></button>
          <button aria-label="Kapat"><Icon w={10} h={9}><path d="M1 1l8 7M9 1L1 8" stroke="#5c6f8e" strokeWidth="2" /></Icon></button>
        </WindowButtons>
      </TitleBar>
      <TabRow>
        {tabs.map((t, i) => <Tab key={t} $active={i === 0}>{t}</Tab>)}
        <HelpButton aria-label="Yardım"><Help /></HelpButton>
      </TabRow>

      <Ribbon>
        <Group title="Pano">
          <PasteButton><Paste />Yapıştır<Arrow color="#a5b3c6" /></PasteButton>
          <IconColumn>
            <button aria-label="Kes"><Cut /></button>
            <button aria-label="Kopyala"><Copy /></button>
            <button aria-label="Biçim Boyacısı"><Brush /></button>
          </IconColumn>
        </Group>

        <Group title="Yazı Tipi">
          <Rows>
            <ControlRow>
              <Combo $w={131}><Select aria-label="Yazı Tipi"><option>Cambria (Başlıklar)</option></Select><Arrow /></Combo>
              <Combo $w={50}><Select aria-label="Yazı Tipi Boyutu"><option>26</option></Select><Arrow /></Combo>
              <Strip>
                <Tool $w={21} aria-label="Büyüt"><Letter $size={17}>A<sup>▴</sup></Letter></Tool>
                <Tool $w={22} aria-label="Küçült"><Letter $size={13}>A<sup>▾</sup></Letter></Tool>
              </Strip>
              <Strip><Tool aria-label="Biçimlendirmeyi Temizle"><Eraser /></Tool></Strip>
            </ControlRow>
            <ControlRow>
              <Strip>
                <Tool><Letter>K</Letter></Tool>
                <Tool><Letter><em>T</em></Letter></Tool>
                <Tool $w={35}><Letter $size={14}><u>A</u></Letter><Arrow /></Tool>
                <Tool $w={27}><Letter $size={12}><s>abc</s></Letter></Tool>
                <Tool $w={24}><Letter>x<sub>2</sub></Letter></Tool>
                <Tool $w={24}><Letter>x<sup>2</sup></Letter></Tool>
                <Tool $w={28}><Letter $size={14}>Aa</Letter><Arrow w={4} /></Tool>
              </Strip>
              <Strip>
                <Tool $w={32} aria-label="Vurgu rengi"><Highlight /><Arrow /></Tool>
                <Tool $w={33} aria-label="Yazı rengi">
                  <Icon w={17} h={17}><text x="2" y="12" fontFamily="Liberation Serif" fontSize="16" fontWeight="bold" fill="#2f5597">A</text><path d="M0 13h16v4H0z" fill="#e0101c" /></Icon>
                  <Arrow />
                </Tool>
              </Strip>
            </ControlRow>
          </Rows>
        </Group>

        <Group title="Paragraf">
          <Rows>
            <ControlRow>
              <Strip>
                <Tool $w={34} aria-label="Madde"><Bullets /><Arrow /></Tool>
                <Tool $w={34} aria-label="Numara"><Numbers /><Arrow /></Tool>
                <Tool $w={28} aria-label="Çok düzeyli"><Multilevel /><Arrow w={4} /></Tool>
              </Strip>
              <Strip><Tool aria-label="Girintiyi azalt"><Indent out /></Tool><Tool aria-label="Girintiyi artır"><Indent /></Tool></Strip>
              <Strip><Tool aria-label="Sırala"><Sort /></Tool></Strip>
              <Strip><Tool><Letter>¶</Letter></Tool></Strip>
            </ControlRow>
            <ControlRow>
              <Strip>
                <Tool $on aria-label="Sola hizala"><Lines h={11} rows={alignRows.left} /></Tool>
                <Tool $w={23} aria-label="Ortala"><Lines h={11} rows={alignRows.center} /></Tool>
                <Tool $w={23} aria-label="Sağa hizala"><Lines h={11} rows={alignRows.right} /></Tool>
                <Tool $w={23} aria-label="İki yana yasla"><Lines h={11} rows={alignRows.full} /></Tool>
              </Strip>
              <Strip><Tool $w={30} aria-label="Satır aralığı"><Spacing /><Arrow /></Tool></Strip>
              <Strip>
                <Tool $w={34} aria-label="Gölgelendirme"><Bucket /><Arrow /></Tool>
                <Tool $w={30} aria-label="Kenarlıklar"><Borders /><Arrow /></Tool>
              </Strip>
            </ControlRow>
          </Rows>
        </Group>

        <Group title="Stiller">
          <Gallery>
            <Cards>
              <Card><Sample>AaBbCcDc</Sample><CardName>¶ Normal</CardName></Card>
              <Card><Sample>AaBbCcDc</Sample><CardName>¶ Aralık Yok</CardName></Card>
              <Card><Sample $heading={1}>AaBbCc</Sample><CardName>Başlık 1</CardName></Card>
              <Card><Sample $heading={2}>AaBbCc</Sample><CardName>Başlık 2</CardName></Card>
            </Cards>
            <GallerySide>
              <GalleryArrow aria-label="Yukarı"><Arrow up color="#9fb2cc" /></GalleryArrow>
              <GalleryArrow aria-label="Aşağı"><Arrow /></GalleryArrow>
              <GalleryArrow aria-label="Diğer"><Icon w={7} h={7}><path d="M0 .5h7" stroke="#4d6a96" /><path d="M1 3h5L3.500 6z" fill="#4d6a96" /></Icon></GalleryArrow>
            </GallerySide>
          </Gallery>
          <BigButton><ChangeStyles />Stilleri<Inline>Değiştir<Arrow /></Inline></BigButton>
        </Group>

        <Group title="Düzenleme" launcher={false}>
          <EditList>
            <EditButton><Binoculars />Bul<Arrow /></EditButton>
            <EditButton><Replace />Değiştir</EditButton>
            <EditButton><Pointer />Seç<Arrow /></EditButton>
          </EditList>
        </Group>
      </Ribbon>

      <Workspace>
        <RulerColumn>
          <TabStop aria-label="Sekme türü">
            <Icon w={14} h={14}><path d="M.5.5h13v13H.5z" fill="#e6effb" stroke="#6f93cc" /><path d="M5 4v6h5" stroke="#333" strokeWidth="2" /></Icon>
          </TabStop>
          <VerticalRuler>
            <TopMargin $vertical><HalfCm n={2} vertical /><Cm n={1} vertical /><Cm vertical /></TopMargin>
            <Span $white $vertical>{centimetres.map((n) => <Cm key={n} n={n} vertical />)}</Span>
          </VerticalRuler>
        </RulerColumn>
        <Center>
          <HorizontalBand>
            <HorizontalRuler>
              <LeftMargin><HalfCm n={2} /><Cm n={1} /><Cm /></LeftMargin>
              <Span $white>{centimetres.map((n) => <Cm key={n} n={n} />)}</Span>
              <Span />
            </HorizontalRuler>
            <TabTicks />
          </HorizontalBand>
          <Canvas>
            <Swoosh width="100%" height="100%" aria-hidden="true">
              <path d="M0 0H984V4Q300 0 200 30Q90 55 0 96z" fill="#a9c8ec" />
              <path d="M0 96Q90 55 200 30V40Q90 70 0 118z" fill="#98b8e0" />
              <path d="M0 116Q50 85 100 66" stroke="#a8c4e8" strokeWidth="2" fill="none" />
              <path d="M250 16Q280 6 320 0H984V16z" fill="#9ebbe6" />
            </Swoosh>
            <SheetFrame>
              <Sheet>
                <Heading>Uzman Yardımcısı<Caret /></Heading>
              </Sheet>
            </SheetFrame>
          </Canvas>
        </Center>
        <ScrollColumn>
          <SplitBar />
          <ScrollButton $light aria-label="Cetvel">
            <Icon w={13} h={13}><path d="M1 1h6v4h5v7H6V8H1z" fill="#fff" stroke="#4c5a70" /><path d="M3 3l7 7" stroke="#4c5a70" strokeDasharray="1 2" /></Icon>
          </ScrollButton>
          <ScrollButton aria-label="Yukarı kaydır"><Arrow up w={8} color="#324d7d" /></ScrollButton>
          <Thumb><Grip color="#7888a0" /></Thumb>
          <Spacer />
          <ScrollButton aria-label="Aşağı kaydır"><Arrow w={8} color="#324d7d" /></ScrollButton>
          <ScrollButton $light aria-label="Önceki sayfa"><Icon w={7} h={8}><path d="M0 4l3.500-4L7 4zM0 8l3.500-4L7 8z" fill="#111" /></Icon></ScrollButton>
          <ScrollButton $light aria-label="Nesne seç"><Icon w={8} h={8}><circle cx="4" cy="4" r="3.200" fill="#d9e2ee" stroke="#222" /></Icon></ScrollButton>
          <ScrollButton $light aria-label="Sonraki sayfa"><Icon w={7} h={8}><path d="M0 0h7L3.500 4zM0 4h7L3.500 8z" fill="#111" /></Icon></ScrollButton>
        </ScrollColumn>
        <IndentMarker>
          <Icon w={10} h={22}>
            <path d="M1 1.500h8v3L5 9 1 4.500zM5 9l4 4.500v2H1v-2zM1 16.500h8v4.500H1z" fill="#eef4fc" stroke="#5b78a8" />
          </Icon>
        </IndentMarker>

        <Pane>
          <PaneHeader>
            <PaneTitle>Stiller</PaneTitle>
            <button aria-label="Görev bölmesi seçenekleri"><Arrow w={9} color="#1d4a8f" /></button>
            <button aria-label="Bölmeyi kapat"><Icon w={9} h={9}><path d="M1 1l7 7M8 1L1 8" stroke="#1d4a8f" strokeWidth="1.700" /></Icon></button>
          </PaneHeader>
          <ListBox>
            <StyleList>
              {styleItems.map(([name, mark]) => (
                <li key={name}><StyleItem $on={name === 'Konu Başlığı'}>{name}<Mark $linked={mark === '¶a'}>{mark}</Mark></StyleItem></li>
              ))}
            </StyleList>
            <ListScroll>
              <ListArrow aria-label="Yukarı"><Chevron up /></ListArrow>
              <Spacer />
              <ListThumb><Grip color="#eef4fe" /></ListThumb>
              <ListArrow aria-label="Aşağı"><Chevron /></ListArrow>
            </ListScroll>
          </ListBox>
          <Checks>
            <CheckLabel><Check type="checkbox" />Önizleme Göster</CheckLabel>
            <CheckLabel><Check type="checkbox" />Bağlantılı Stilleri Devre Dışı Bırak</CheckLabel>
          </Checks>
          <PaneFooter>
            <PaneButton $on aria-label="Yeni Stil"><StylesIcon kind="new" /></PaneButton>
            <PaneButton aria-label="Stil Denetçisi"><StylesIcon kind="inspect" /></PaneButton>
            <PaneButton aria-label="Stilleri Yönet"><StylesIcon kind="manage" /></PaneButton>
            <OptionsLink href="#secenekler">Seçenekler...</OptionsLink>
          </PaneFooter>
          <Tooltip role="tooltip">Yeni Stil</Tooltip>
        </Pane>
      </Workspace>

      <StatusBar>
        <StatusText>Virüs tarama çalıştırılıyor...</StatusText>
        <StatusTools>
          <ViewStrip>
            {[0, 1, 2, 3, 4].map((k) => <ViewButton key={k} $on={k === 0} aria-label={`Görünüm ${k + 1}`}><PageView kind={k} /></ViewButton>)}
          </ViewStrip>
          <span>%100</span>
          <ZoomRow>
            <button aria-label="Uzaklaştır"><ZoomIcon /></button>
            <Slider type="range" aria-label="Yakınlaştırma" defaultValue={50} />
            <button aria-label="Yakınlaştır"><ZoomIcon plus /></button>
          </ZoomRow>
        </StatusTools>
      </StatusBar>
    </Window>
  );
}
